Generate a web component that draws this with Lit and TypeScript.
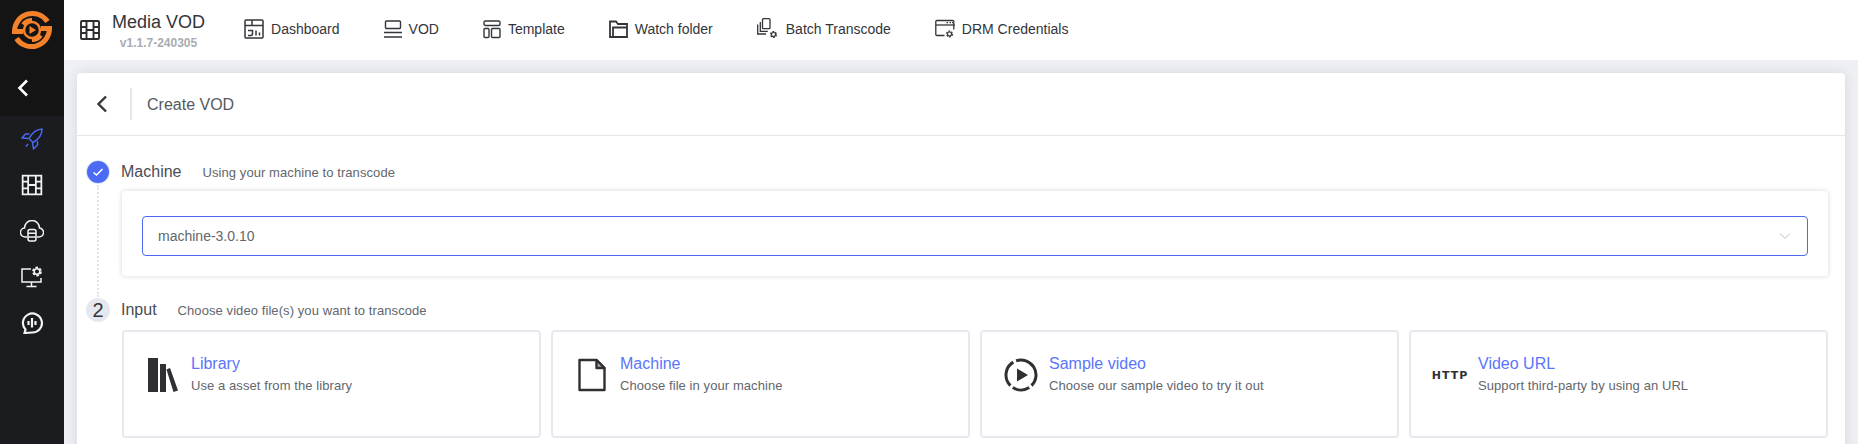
import { LitElement, css, html, svg } from 'lit'
import { customElement } from 'lit/decorators.js'

// cog drawn as a ring plus dashed teeth
const gear = (x: number, y: number, r: number) => svg`
	<circle cx=${x} cy=${y} r=${r} fill="none" stroke="currentColor" stroke-width=${r * 0.55} />
	<circle cx=${x} cy=${y} r=${r * 1.45} fill="none" stroke="currentColor" stroke-width=${r * 0.6} stroke-dasharray=${`${r * 0.95} ${r * 0.57}`} />
`

const navItems = [
	{
		label: 'Dashboard',
		icon: html`<svg width="20" height="20" viewBox="0 0 20 20" fill="none" stroke="currentColor" stroke-width="1.500">
			<rect x="1" y="1" width="18" height="18" rx="1" />
			<path d="M1 6.500h18M8 1v5.500M4 11.500h4.500v3.500q0 1.500-1.500 1.500H4M12 11.500v5M15.500 13.500v3" />
		</svg>`,
	},
	{
		label: 'VOD',
		icon: html`<svg width="18" height="20" viewBox="0 0 18 20" fill="none" stroke="currentColor" stroke-width="1.400">
			<rect x="1.500" y="2" width="15" height="7.500" rx="1" />
			<path d="M0 13.500h18M0 18h18" />
		</svg>`,
	},
	{
		label: 'Template',
		icon: html`<svg width="18" height="20" viewBox="0 0 18 20" fill="none" stroke="currentColor" stroke-width="1.400">
			<rect x="1" y="2" width="16" height="4.500" rx="1.500" />
			<rect x="1" y="9.500" width="5" height="9" rx="1" />
			<rect x="8.500" y="9.500" width="8.500" height="9" rx="1" />
		</svg>`,
	},
	{
		label: 'Watch folder',
		icon: html`<svg width="19" height="20" viewBox="0 0 19 20" fill="none" stroke="currentColor" stroke-width="1.800">
			<path d="M1 18V2.500h6l2 2.500h9v13z" />
			<path d="M4 18V8.500h14" />
		</svg>`,
	},
	{
		label: 'Batch Transcode',
		icon: html`<svg width="22" height="22" viewBox="0 0 22 22" fill="none" stroke="currentColor" stroke-width="1.300">
			<rect x="5.500" y="0.700" width="7.500" height="10" rx="1" />
			<path d="M3.300 4v9.300h7.500M0.700 6.500V16h8.300" />
			${gear(16.500, 16.500, 2)}
		</svg>`,
	},
	{
		label: 'DRM Credentials',
		icon: html`<svg width="20" height="20" viewBox="0 0 20 20" fill="none" stroke="currentColor" stroke-width="1.300">
			<path d="M9.500 16.500H1.800q-1 0-1-1V2.500q0-1 1-1h16q1 0 1 1v8" />
			<path d="M0.800 6h19" />
			<path d="M11.500 3.700h1.500M14.500 3.700h1.500M17 3.700h1" />
			${gear(14.500, 15, 2)}
		</svg>`,
	},
]

const sourceCards = [
	{
		title: 'Library',
		desc: 'Use a asset from the library',
		icon: html`<svg width="30" height="34" viewBox="0 0 30 34" fill="currentColor">
			<rect x="0" y="0" width="10" height="34" />
			<rect x="12" y="6" width="6" height="28" />
			<path d="M18.500 11.500l3.500-1.500 8 22.500-4.500 1.500z" />
		</svg>`,
	},
	{
		title: 'Machine',
		desc: 'Choose file in your machine',
		icon: html`<svg width="28" height="34" viewBox="0 0 28 34" fill="none" stroke="currentColor" stroke-width="2.400" stroke-linejoin="round">
			<path d="M1.500 2h17l8 8v22h-25z" />
			<path d="M18.500 2v8h8z" fill="#a9abaf" />
		</svg>`,
	},
	{
		title: 'Sample video',
		desc: 'Choose our sample video to try it out',
		icon: html`<svg width="34" height="34" viewBox="0 0 34 34" fill="none" stroke="currentColor" stroke-width="3">
			<path d="M12.100 2.800A15 15 0 0 1 27.600 27.600" />
			<path d="M25.200 29.600A15 15 0 0 1 8.800 29.600" />
			<path d="M6.400 27.600A15 15 0 0 1 9.300 4.100" />
			<path d="M13 10.500l11 6.500-11 6.500z" fill="currentColor" stroke="none" />
		</svg>`,
	},
	{
		title: 'Video URL',
		desc: 'Support third-party by using an URL',
		icon: html`<span class="http">HTTP</span>`,
	},
]

@customElement('app-root')
export class AppRoot extends LitElement {
	static styles = css`
		:host {
			display: flex;
			width: 1858px;
			height: 444px;
			overflow: hidden;
			background: #eff0f4;
			font-family: 'Liberation Sans', Arial, sans-serif;
			color: #3f4248;
		}

		.sidebar {
			width: 64px;
			flex: none;
			background: #1b1c1f;
			display: flex;
			flex-direction: column;
			align-items: center;
		}

		.brand {
			width: 100%;
			height: 116px;
			background: #141414;
			display: flex;
			flex-direction: column;
			align-items: center;
		}

		.logo {
			margin-top: 10px;
		}

		.collapse {
			margin-top: 29px;
			align-self: flex-start;
			margin-left: 17px;
		}

		.side-icon {
			margin-top: 24px;
			color: #f2f3f5;
		}

		.side-icon.first {
			margin-top: 12px;
			color: #4a68f0;
		}

		.main {
			flex: 1;
			min-width: 0;
			display: flex;
			flex-direction: column;
		}

		.topbar {
			height: 60px;
			flex: none;
			background: #fff;
			display: flex;
			align-items: center;
			padding-left: 16px;
			color: #2b2d31;
		}

		.app-name {
			margin-left: 12px;
			text-align: center;
		}

		.app-name b {
			display: block;
			font-weight: 400;
			font-size: 18px;
			line-height: 22px;
			color: #33353a;
		}

		.app-name small {
			display: block;
			font-size: 12px;
			font-weight: 700;
			line-height: 14px;
			color: #a9acb2;
			margin-top: 3px;
		}

		nav {
			display: flex;
			margin: -2px 0 0 39px;
		}

		.nav-item {
			display: flex;
			align-items: center;
			gap: 7px;
			font-size: 14px;
			color: #33353a;
			margin-right: 44px;
		}

		.content {
			padding: 13px 13px 0;
		}

		.card {
			background: #fff;
			border-radius: 4px;
			box-shadow: 0 0 12px rgba(40, 50, 80, 0.13);
			height: 420px;
		}

		.card-head {
			height: 62px;
			display: flex;
			align-items: center;
			border-bottom: 1px solid #e3e5ea;
		}

		.back {
			margin-left: 19px;
			color: #33353a;
		}

		.divider {
			width: 2px;
			height: 32px;
			background: #e4e6ea;
			margin: 0 15px 0 22px;
		}

		.card-title {
			font-size: 16px;
			padding-top: 2px;
			color: #55585e;
		}

		.steps {
			padding: 25px 17px 0 10px;
		}

		.step-head {
			display: flex;
			align-items: center;
			height: 22px;
		}

		.badge {
			width: 24px;
			height: 24px;
			margin: 0 -1px;
			border-radius: 50%;
			flex: none;
			display: flex;
			align-items: center;
			justify-content: center;
			background: #e5e8ef;
			color: #33353a;
			font-size: 20px;
		}

		.badge.done {
			width: 22px;
			height: 22px;
			margin: 0;
			background: #4b6bf5;
			color: #fff;
			box-shadow: 0 0 0 1px #dfe4fb;
		}

		.step-name {
			margin-left: 12px;
			font-size: 16px;
			color: #4a4d53;
		}

		.step-hint {
			margin-left: 21px;
			font-size: 13px;
			letter-spacing: 0.08px;
			color: #63666c;
		}

		.step-body {
			display: flex;
		}

		.rail {
			width: 0;
			margin: 2px 0 2px 10px;
			border-left: 2px dotted #e0e2e8;
		}

		.machine-box {
			margin: 8px 0 23px 23px;
			flex: 1;
			height: 85px;
			box-sizing: border-box;
			padding: 25px 20px 20px;
			border-radius: 4px;
			background: #fff;
			box-shadow: 0 0 5px rgba(30, 40, 70, 0.2);
		}

		.select {
			height: 40px;
			box-sizing: border-box;
			border: 1px solid #4b6bf5;
			border-radius: 4px;
			display: flex;
			align-items: center;
			justify-content: space-between;
			padding: 0 16px 0 15px;
			font-size: 14px;
			color: #63666c;
		}

		.select svg {
			color: #bcbec3;
		}

		.sources {
			display: grid;
			grid-template-columns: repeat(4, 419px);
			gap: 10px;
			margin: 9px 0 0 35px;
		}

		.source {
			height: 108px;
			box-sizing: border-box;
			border: 2px solid #e6e9ef;
			border-radius: 4px;
			display: flex;
			padding: 20px 0 0 22px;
		}

		.ico {
			width: 34px;
			height: 34px;
			margin-top: 6px;
			flex: none;
			display: flex;
			align-items: center;
			justify-content: center;
			color: #2f3033;
		}

		.http {
			font-family: 'DejaVu Sans', sans-serif;
			font-weight: 700;
			font-size: 11px;
			letter-spacing: 1px;
			white-space: nowrap;
		}

		.txt {
			margin-left: 11px;
			padding-top: 2px;
		}

		.txt h4 {
			margin: 0;
			font-size: 16px;
			font-weight: 400;
			line-height: 20px;
			color: #5a75fb;
		}

		.txt p {
			margin: 4px 0 0;
			font-size: 13px;
			letter-spacing: 0.08px;
			line-height: 16px;
			color: #63666c;
		}
	`

	render() {
		return html`
			<aside class="sidebar">
				<div class="brand">
					<svg class="logo" width="40" height="40" viewBox="0 0 40 40" fill="none" stroke="#f5822a">
						<path d="M35.500 11.500A18 18 0 0 0 2.500 21.500H11" stroke-width="5" />
						<path d="M4.500 28.500A18 18 0 0 0 37.500 18.500H29" stroke-width="5" />
						<path d="M11 14.500A11 11 0 0 1 20 10M29 25.500A11 11 0 0 1 20 30" stroke-width="4" />
						<circle cx="20" cy="20" r="8" stroke-width="2.500" />
						<path d="M17.500 16l6.500 4-6.500 4z" fill="#f5822a" stroke="none" />
					</svg>
					<svg class="collapse" width="12" height="18" viewBox="0 0 12 18" fill="none" stroke="#fff" stroke-width="2.600">
						<path d="M10 1.500L2.500 9l7.500 7.500" />
					</svg>
				</div>
				<svg class="side-icon first" width="22" height="22" viewBox="0 0 22 22" fill="none" stroke="currentColor" stroke-width="1.500" stroke-linejoin="round">
					<path d="M21 1c-6 .5-9.500 3-13 9.500l4 4c6.500-3.500 9-7.500 9-13.500z" />
					<path d="M8.500 6H4.500L1 10l6.500 .5M16.500 13v4l-4 4-1-6.500M7 16l-2 2.500" />
				</svg>
				<svg class="side-icon" width="22" height="22" viewBox="0 0 20 20" fill="none" stroke="currentColor" stroke-width="1.600">
					<rect x="1.500" y="1.500" width="17" height="17" />
					<path d="M6.500 1.500v17M13.500 1.500v17M1.500 7h5M1.500 13h5M13.500 7h5M13.500 13h5M6.500 10h7" />
				</svg>
				<svg class="side-icon" width="24" height="22" viewBox="0 0 24 22" fill="none" stroke="currentColor" stroke-width="1.500">
					<path d="M7 17H5.500A4.500 4.500 0 0 1 4.500 8a7.500 7.500 0 0 1 15 0A4.500 4.500 0 0 1 18.500 17H17" />
					<rect x="8" y="9.500" width="8" height="11.500" rx="2" />
					<path d="M8 13.300h8M8 17h8" />
				</svg>
				<svg class="side-icon" width="22" height="22" viewBox="0 0 22 22" fill="none" stroke="currentColor" stroke-width="1.500">
					<path d="M10 3H1v13h19v-4" />
					<path d="M10.500 16v4M5.500 20.500h10" />
					${gear(16, 5.500, 2.800)}
				</svg>
				<svg class="side-icon" width="22" height="22" viewBox="0 0 22 22" fill="none" stroke="currentColor" stroke-width="2.200">
					<path d="M3.500 21l1-3.500A9.500 9.500 0 1 1 11 20.500z" />
					<path d="M7.500 9v4M11 6v9.500M14.500 9v4" />
				</svg>
			</aside>
			<div class="main">
				<header class="topbar">
					<svg width="20" height="20" viewBox="0 0 20 20" fill="none" stroke="currentColor" stroke-width="1.900">
						<rect x="1" y="1" width="18" height="18" rx="1" />
						<path d="M6.500 1v18M13.500 1v18M1 7h5.500M1 13h5.500M13.500 7H19M13.500 13H19M6.500 10h7" />
					</svg>
					<div class="app-name"><b>Media VOD</b><small>v1.1.7-240305</small></div>
					<nav>
						${navItems.map((n) => html`<div class="nav-item">${n.icon}<span>${n.label}</span></div>`)}
					</nav>
				</header>
				<div class="content">
					<section class="card">
						<div class="card-head">
							<svg class="back" width="12" height="18" viewBox="0 0 12 18" fill="none" stroke="currentColor" stroke-width="2.400">
								<path d="M10 1.500L2.500 9l7.500 7.500" />
							</svg>
							<span class="divider"></span>
							<span class="card-title">Create VOD</span>
						</div>
						<div class="steps">
							<div class="step-head">
								<span class="badge done">
									<svg width="12" height="12" viewBox="0 0 12 12" fill="none" stroke="currentColor" stroke-width="1.600"><path d="M1.500 6.500l3 2.500 6-6" /></svg>
								</span>
								<span class="step-name">Machine</span>
								<span class="step-hint">Using your machine to transcode</span>
							</div>
							<div class="step-body">
								<div class="rail"></div>
								<div class="machine-box">
									<div class="select">
										<span>machine-3.0.10</span>
										<svg width="12" height="8" viewBox="0 0 12 8" fill="none" stroke="currentColor" stroke-width="1"><path d="M1 1.500l5 5 5-5" /></svg>
									</div>
								</div>
							</div>
							<div class="step-head">
								<span class="badge">2</span>
								<span class="step-name">Input</span>
								<span class="step-hint">Choose video file(s) you want to transcode</span>
							</div>
							<div class="sources">
								${sourceCards.map(
									(c) => html`<div class="source">
										<span class="ico">${c.icon}</span>
										<div class="txt">
											<h4>${c.title}</h4>
											<p>${c.desc}</p>
										</div>
									</div>`,
								)}
							</div>
						</div>
					</section>
				</div>
			</div>
		`
	}
}
